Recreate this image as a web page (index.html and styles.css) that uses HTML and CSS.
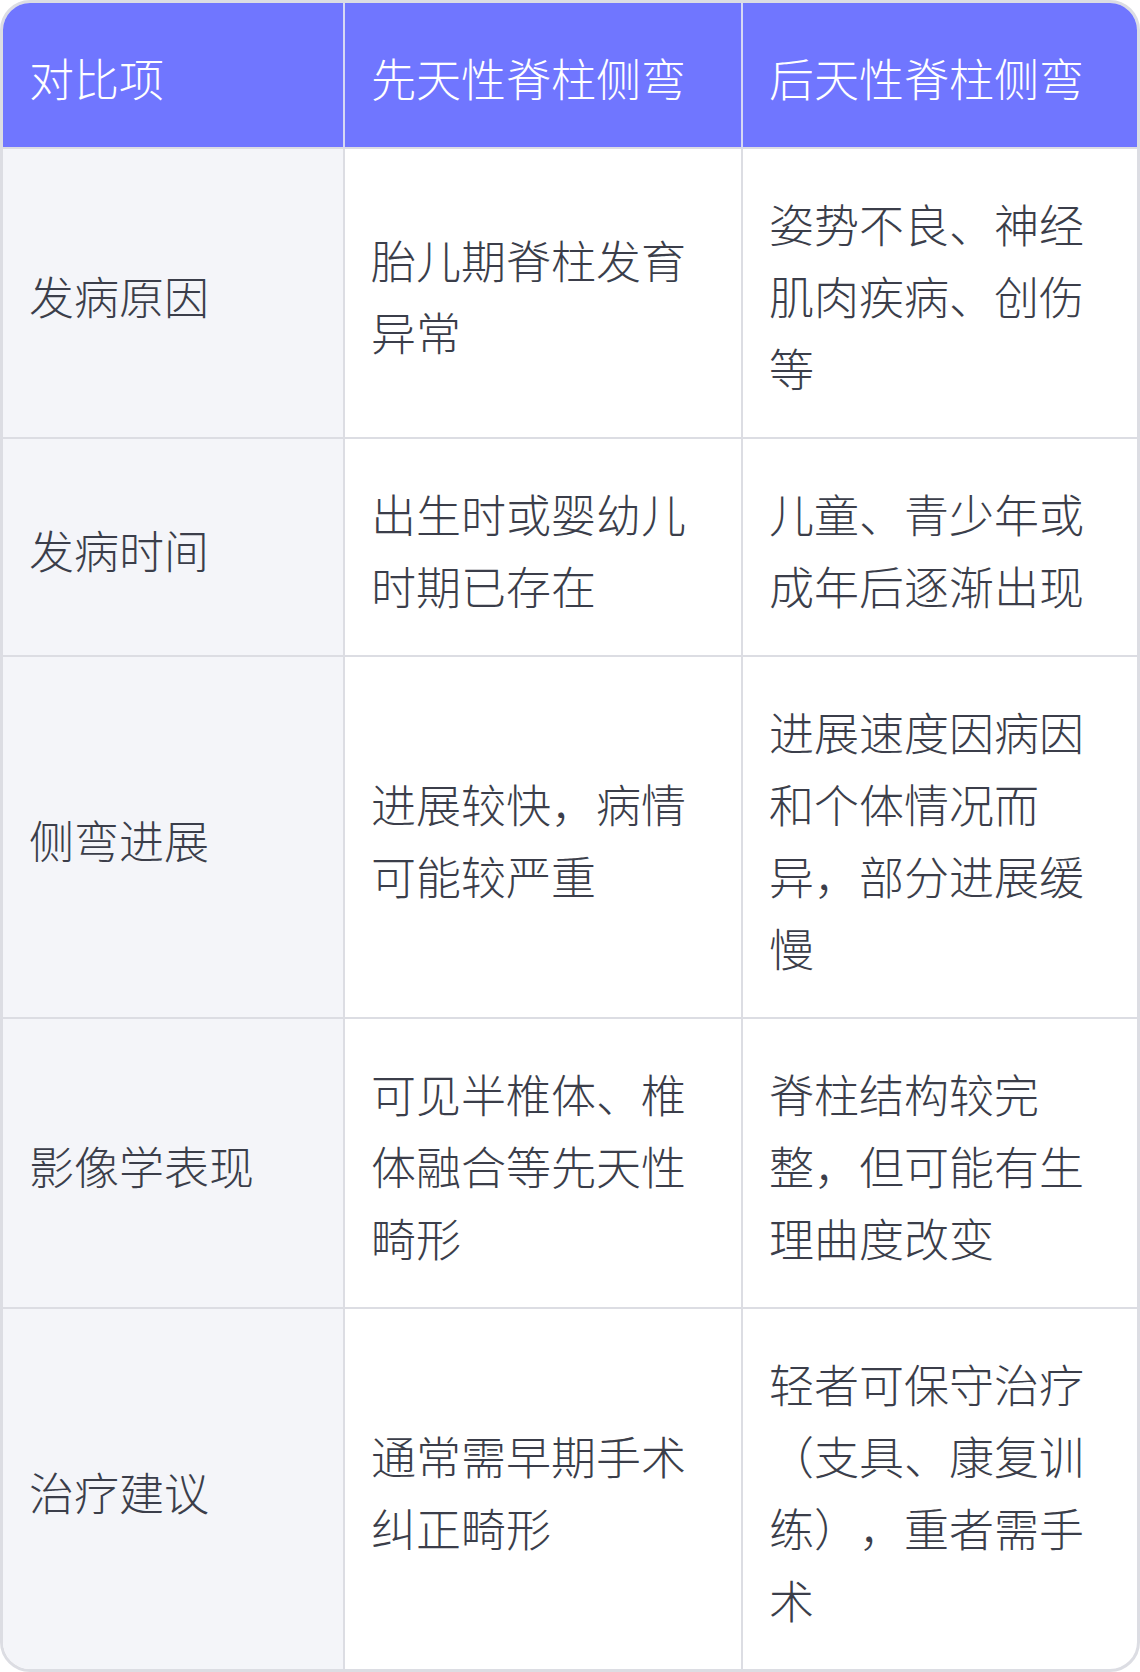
FILE: index.html
```html
<!DOCTYPE html>
<html lang="zh-CN">
<head>
<meta charset="utf-8">
<title>先天性与后天性脊柱侧弯对比</title>
<link rel="stylesheet" href="styles.css">
</head>
<body>
<div class="wrap">
  <table class="cmp">
    <colgroup>
      <col class="c1">
      <col class="c2">
      <col class="c3">
    </colgroup>
    <thead>
      <tr>
        <th>对比项</th>
        <th>先天性脊柱侧弯</th>
        <th>后天性脊柱侧弯</th>
      </tr>
    </thead>
    <tbody>
      <tr>
        <td class="label">发病原因</td>
        <td>胎儿期脊柱发育异常</td>
        <td>姿势不良、神经肌肉疾病、创伤等</td>
      </tr>
      <tr>
        <td class="label">发病时间</td>
        <td>出生时或婴幼儿时期已存在</td>
        <td>儿童、青少年或成年后逐渐出现</td>
      </tr>
      <tr>
        <td class="label">侧弯进展</td>
        <td>进展较快，病情可能较严重</td>
        <td>进展速度因病因和个体情况而异，部分进展缓慢</td>
      </tr>
      <tr>
        <td class="label">影像学表现</td>
        <td>可见半椎体、椎体融合等先天性畸形</td>
        <td>脊柱结构较完整，但可能有生理曲度改变</td>
      </tr>
      <tr>
        <td class="label">治疗建议</td>
        <td>通常需早期手术纠正畸形</td>
        <td>轻者可保守治疗（支具、康复训练），重者需手术</td>
      </tr>
    </tbody>
  </table>
</div>
</body>
</html>
```
FILE: styles.css
```css
html, body {
  margin: 0;
  padding: 0;
  background: #ffffff;
}

.wrap {
  width: 1140px;
  box-sizing: border-box;
  border: 3px solid #dcdde3;
  border-radius: 30px;
  overflow: hidden;
  background: #ffffff;
}

.cmp {
  width: 1134px;
  table-layout: fixed;
  border-collapse: separate;
  border-spacing: 0;
  font-family: "Noto Sans CJK SC", "Noto Sans", sans-serif;
  font-size: 45px;
  line-height: 72px;
  color: #3b3e4a;
  text-spacing-trim: space-all;
}

.c1 { width: 342px; }
.c2 { width: 398px; }
.c3 { width: 394px; }

.cmp th,
.cmp td {
  padding: 39px 28px 33px 26px;
  text-align: left;
  vertical-align: middle;
  font-weight: 300;
  border-right: 2px solid #dcdde3;
  border-bottom: 2px solid #dcdde3;
}

.cmp th:last-child,
.cmp td:last-child {
  border-right: none;
}

.cmp tbody tr:last-child td {
  border-bottom: none;
}

.cmp th {
  background: #7076ff;
  color: #ffffff;
  border-right-color: #d6d8f4;
  border-bottom-color: #dcdde3;
}

.cmp td.label {
  background: #f4f5f9;
}
```
